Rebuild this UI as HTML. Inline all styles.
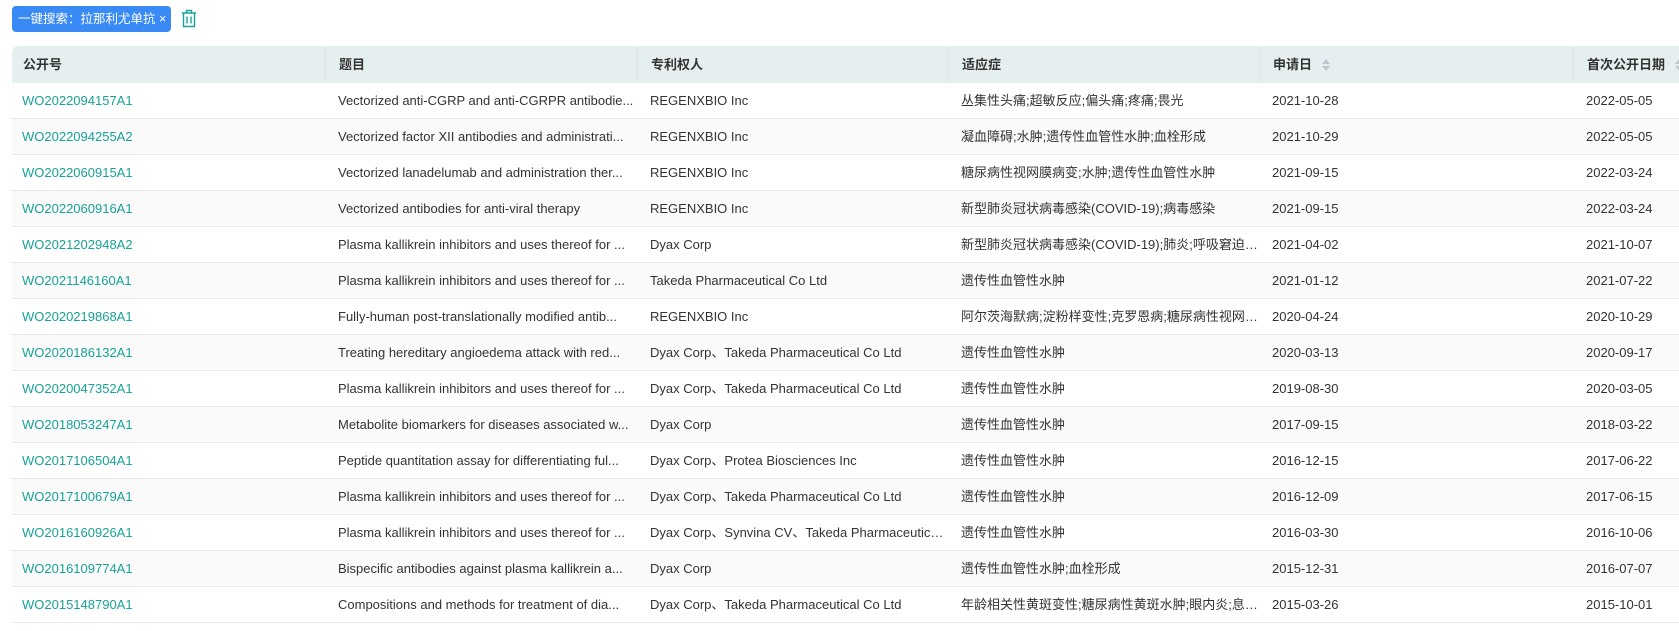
<!DOCTYPE html>
<html><head><meta charset="utf-8">
<style>
*{margin:0;padding:0;box-sizing:border-box}
body{width:1679px;height:631px;overflow:hidden;background:#fff;font-family:"Liberation Sans","Noto Sans CJK SC",sans-serif;font-size:13px;color:#333}
.tag{position:absolute;left:12px;top:6px;width:159px;height:26px;background:#3a8af5;border-radius:4px;color:#fff;font-size:12.5px;line-height:26px;padding-left:6px;white-space:nowrap;overflow:hidden}
.trash{position:absolute;left:181px;top:9px}
table{position:absolute;left:12px;top:46px;border-collapse:separate;border-spacing:0;table-layout:fixed;width:1900px}
th{background:#e6eff0;height:37px;line-height:18px;text-align:left;font-weight:bold;font-size:13px;color:#333;padding-left:13px;border-left:1px solid #dbe8ea;white-space:nowrap;vertical-align:middle}
th:first-child{border-left:none;border-top-left-radius:6px;padding-left:11px}
td{height:36px;line-height:18px;padding-left:13px;border-bottom:1px solid #e8e8e8;white-space:nowrap;overflow:hidden;text-overflow:ellipsis;vertical-align:middle}
td:first-child{padding-left:10px;color:#17a398}
tr:nth-child(odd) td{background:#fafafa}
.sort{display:inline-block;vertical-align:middle;margin-left:10px;width:8px;height:12px;position:relative}
.sort:before{content:"";position:absolute;top:0;left:0;border:4px solid transparent;border-bottom:5px solid #c0c4cc;border-top:0}
.sort:after{content:"";position:absolute;bottom:0;left:0;border:4px solid transparent;border-top:5px solid #c0c4cc;border-bottom:0}
</style></head><body>
<div class="tag">一键搜索：拉那利尤单抗 ×</div>
<svg class="trash" width="16" height="19" viewBox="0 0 16 19" fill="none" stroke="#1aa39a" stroke-width="1.4"><path d="M1 4h14M5.5 4V1.5h5V4M2.5 4v13.5h11V4M6 7.5v7M10 7.5v7"/></svg>
<table>
<colgroup><col style="width:313px"><col style="width:312px"><col style="width:311px"><col style="width:311px"><col style="width:314px"><col style="width:339px"></colgroup>
<tr><th>公开号</th><th>题目</th><th>专利权人</th><th>适应症</th><th>申请日<span class="sort"></span></th><th>首次公开日期<span class="sort"></span></th></tr>
<tr><td>WO2022094157A1</td><td>Vectorized anti-CGRP and anti-CGRPR antibodie...</td><td>REGENXBIO Inc</td><td>丛集性头痛;超敏反应;偏头痛;疼痛;畏光</td><td>2021-10-28</td><td>2022-05-05</td></tr>
<tr><td>WO2022094255A2</td><td>Vectorized factor XII antibodies and administrati...</td><td>REGENXBIO Inc</td><td>凝血障碍;水肿;遗传性血管性水肿;血栓形成</td><td>2021-10-29</td><td>2022-05-05</td></tr>
<tr><td>WO2022060915A1</td><td>Vectorized lanadelumab and administration ther...</td><td>REGENXBIO Inc</td><td>糖尿病性视网膜病变;水肿;遗传性血管性水肿</td><td>2021-09-15</td><td>2022-03-24</td></tr>
<tr><td>WO2022060916A1</td><td>Vectorized antibodies for anti-viral therapy</td><td>REGENXBIO Inc</td><td>新型肺炎冠状病毒感染(COVID-19);病毒感染</td><td>2021-09-15</td><td>2022-03-24</td></tr>
<tr><td>WO2021202948A2</td><td>Plasma kallikrein inhibitors and uses thereof for ...</td><td>Dyax Corp</td><td>新型肺炎冠状病毒感染(COVID-19);肺炎;呼吸窘迫综...</td><td>2021-04-02</td><td>2021-10-07</td></tr>
<tr><td>WO2021146160A1</td><td>Plasma kallikrein inhibitors and uses thereof for ...</td><td>Takeda Pharmaceutical Co Ltd</td><td>遗传性血管性水肿</td><td>2021-01-12</td><td>2021-07-22</td></tr>
<tr><td>WO2020219868A1</td><td>Fully-human post-translationally modified antib...</td><td>REGENXBIO Inc</td><td>阿尔茨海默病;淀粉样变性;克罗恩病;糖尿病性视网膜...</td><td>2020-04-24</td><td>2020-10-29</td></tr>
<tr><td>WO2020186132A1</td><td>Treating hereditary angioedema attack with red...</td><td>Dyax Corp、Takeda Pharmaceutical Co Ltd</td><td>遗传性血管性水肿</td><td>2020-03-13</td><td>2020-09-17</td></tr>
<tr><td>WO2020047352A1</td><td>Plasma kallikrein inhibitors and uses thereof for ...</td><td>Dyax Corp、Takeda Pharmaceutical Co Ltd</td><td>遗传性血管性水肿</td><td>2019-08-30</td><td>2020-03-05</td></tr>
<tr><td>WO2018053247A1</td><td>Metabolite biomarkers for diseases associated w...</td><td>Dyax Corp</td><td>遗传性血管性水肿</td><td>2017-09-15</td><td>2018-03-22</td></tr>
<tr><td>WO2017106504A1</td><td>Peptide quantitation assay for differentiating ful...</td><td>Dyax Corp、Protea Biosciences Inc</td><td>遗传性血管性水肿</td><td>2016-12-15</td><td>2017-06-22</td></tr>
<tr><td>WO2017100679A1</td><td>Plasma kallikrein inhibitors and uses thereof for ...</td><td>Dyax Corp、Takeda Pharmaceutical Co Ltd</td><td>遗传性血管性水肿</td><td>2016-12-09</td><td>2017-06-15</td></tr>
<tr><td>WO2016160926A1</td><td>Plasma kallikrein inhibitors and uses thereof for ...</td><td>Dyax Corp、Synvina CV、Takeda Pharmaceutical...</td><td>遗传性血管性水肿</td><td>2016-03-30</td><td>2016-10-06</td></tr>
<tr><td>WO2016109774A1</td><td>Bispecific antibodies against plasma kallikrein a...</td><td>Dyax Corp</td><td>遗传性血管性水肿;血栓形成</td><td>2015-12-31</td><td>2016-07-07</td></tr>
<tr><td>WO2015148790A1</td><td>Compositions and methods for treatment of dia...</td><td>Dyax Corp、Takeda Pharmaceutical Co Ltd</td><td>年龄相关性黄斑变性;糖尿病性黄斑水肿;眼内炎;息肉...</td><td>2015-03-26</td><td>2015-10-01</td></tr>
</table>
</body></html>
